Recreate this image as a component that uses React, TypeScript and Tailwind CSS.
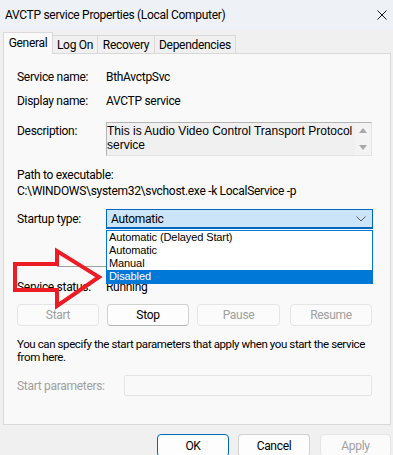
import React from "react";

const tabs = ["Log On", "Recovery", "Dependencies"];
const options = ["Automatic (Delayed Start)", "Automatic", "Manual", "Disabled"];

const Row = ({ label, value }: { label: string; value: string }) => (
  <div className="flex h-[16px] items-center">
    <span className="w-[89px] shrink-0">{label}</span>
    <span>{value}</span>
  </div>
);

const SvcButton = ({ text, enabled, w }: { text: string; enabled?: boolean; w: string }) => (
  <div
    className={`${w} flex h-[22px] items-center justify-center rounded-[4px] border ${
      enabled ? "border-[#d1d1d1] border-b-[#b5b5b5] bg-[#fdfdfd] text-black" : "border-[#e5e5e5] bg-[#fbfbfb] text-[#a0a0a0]"
    }`}
  >
    {text}
  </div>
);

export default function App() {
  return (
    <div className="relative h-[455px] w-[393px] overflow-hidden bg-[#f0f0f0] font-['Roboto',sans-serif] text-[12px] leading-[16px] tracking-[-0.3px] text-black">
      {/* title bar */}
      <div className="flex h-[30px] items-center justify-between bg-[#eef2f7] pl-[5px] pr-[5px]">
        <span className="text-[12px]">AVCTP service Properties (Local Computer)</span>
        <svg width="10" height="10" viewBox="0 0 10 10" className="mr-[1px]">
          <path d="M0.5 0.5 L9.5 9.5 M9.5 0.5 L0.5 9.5" stroke="#1a1a1a" strokeWidth="1" />
        </svg>
      </div>

      {/* tabs */}
      <div className="flex h-[23px] items-end pl-[3px]">
        <div className="relative z-10 mb-[-1px] flex h-[22px] w-[50px] items-center justify-center border border-b-0 border-[#d9d9d9] bg-[#f9f9f9] pb-[1px]">
          General
        </div>
        {tabs.map((t) => (
          <div
            key={t}
            className={`flex h-[18px] items-center justify-center border border-l-0 border-b-0 border-[#d9d9d9] bg-[#f0f0f0] ${
              t === "Log On" ? "w-[45px]" : t === "Recovery" ? "w-[57px]" : "w-[81px]"
            }`}
          >
            {t}
          </div>
        ))}
      </div>

      {/* tab page */}
      <div className="ml-[3px] flex h-[372px] w-[388px] flex-col border border-[#d9d9d9] bg-[#f9f9f9] pl-[13px]">
        <div className="mt-[15px]">
          <Row label="Service name:" value="BthAvctpSvc" />
        </div>
        <div className="mt-[8px]">
          <Row label="Display name:" value="AVCTP service" />
        </div>
        <div className="mt-[13px] flex h-[34px]">
          <span className="w-[89px] shrink-0 pt-[1px]">Description:</span>
          <div className="flex w-[266px] border border-[#b4b4b4] border-b-[#e3e3e3] border-r-[#e3e3e3] bg-[#f0f0f0]">
            <div className="flex-1 pt-[1px] font-['Liberation_Sans',sans-serif] text-[12px] leading-[14px] tracking-normal">
              This is Audio Video Control Transport Protocol service
            </div>
            <div className="flex w-[16px] flex-col items-center justify-between bg-[#f3f3f3] py-[5px]">
              <svg width="8" height="5" viewBox="0 0 8 5">
                <path d="M0 5 L4 0 L8 5 Z" fill="#a8a8a8" />
              </svg>
              <svg width="8" height="5" viewBox="0 0 8 5">
                <path d="M0 0 L8 0 L4 5 Z" fill="#a8a8a8" />
              </svg>
            </div>
          </div>
        </div>
        <div className="mt-[11px] h-[16px]">Path to executable:</div>
        <div className="h-[16px]">C:\WINDOWS\system32\svchost.exe -k LocalService -p</div>

        <div className="mt-[10px] flex h-[20px] items-center">
          <span className="w-[89px] shrink-0">Startup type:</span>
          <div className="flex h-[20px] w-[267px] items-center justify-between border border-b-2 border-[#0067c0] bg-[#cce4f7] pl-[4px] pr-[6px]">
            <span>Automatic</span>
            <svg width="10" height="6" viewBox="0 0 10 6">
              <path d="M0.5 0.5 L5 5 L9.5 0.5" stroke="#5a5a5a" strokeWidth="1" fill="none" />
            </svg>
          </div>
        </div>

        <div className="ml-[40px] mt-[37px] h-[1px] w-[49px] bg-[#a0a0a0]" />

        <div className="mt-[12px]">
          <Row label="Service status:" value="Running" />
        </div>

        <div className="mt-[9px] flex">
          <SvcButton text="Start" w="w-[82px]" />
          <div className="ml-[8px]">
            <SvcButton text="Stop" enabled w="w-[82px]" />
          </div>
          <div className="ml-[8px]">
            <SvcButton text="Pause" w="w-[83px]" />
          </div>
          <div className="ml-[10px]">
            <SvcButton text="Resume" w="w-[82px]" />
          </div>
        </div>

        <div className="mt-[12px] w-[366px] text-[11.5px] leading-[13px] tracking-[-0.4px]">
          You can specify the start parameters that apply when you start the service from here.
        </div>

        <div className="mt-[11px] flex h-[21px] items-center">
          <span className="w-[107px] shrink-0 text-[#a0a0a0]">Start parameters:</span>
          <div className="h-[21px] w-[248px] rounded-[2px] border border-[#e5e5e5] bg-[#f9f9f9]" />
        </div>
      </div>

      {/* dialog buttons */}
      <div className="mt-[9px] flex justify-end pr-[2px]">
        <div className="flex h-[23px] w-[72px] items-center justify-center rounded-[4px] border border-[#0067c0] bg-[#fdfdfd]">
          OK
        </div>
        <div className="ml-[9px] flex h-[23px] w-[72px] items-center justify-center rounded-[4px] border border-[#d1d1d1] border-b-[#b5b5b5] bg-[#fdfdfd]">
          Cancel
        </div>
        <div className="ml-[10px] flex h-[23px] w-[71px] items-center justify-center rounded-[4px] border border-[#e5e5e5] bg-[#fbfbfb] text-[#a0a0a0]">
          Apply
        </div>
      </div>

      {/* open dropdown list */}
      <div className="absolute left-[106px] top-[230px] w-[267px] border border-[#0078d7] bg-white font-['Liberation_Sans',sans-serif] text-[11px] leading-[13px] tracking-[-0.1px]">
        {options.map((o) => (
          <div key={o} className={`h-[13px] pl-[2px] ${o === "Disabled" ? "bg-[#0078d7] text-white" : ""}`}>
            {o}
          </div>
        ))}
      </div>

      {/* red annotation arrow */}
      <svg className="absolute left-0 top-0" width="393" height="455" viewBox="0 0 393 455" fill="none">
        <path
          d="M15 264 L57 264 L57 251 L99 277 L57 306 L57 290 L15 290 Z"
          stroke="#ed1c24"
          strokeWidth="4"
          strokeLinejoin="miter"
        />
      </svg>
    </div>
  );
}
